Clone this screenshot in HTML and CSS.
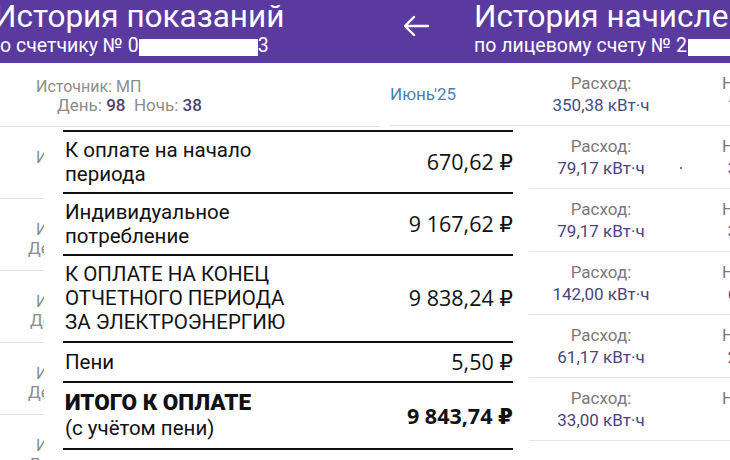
FILE: index.html
```html
<!DOCTYPE html>
<html lang="ru">
<head>
    <meta charset="UTF-8">
    <meta name="viewport" content="width=device-width, initial-scale=1.0">
    <title>История начислений</title>
    <link rel="stylesheet" href="styles.css">
</head>
<body>
    <div class="collage">

        <section class="screen screen-meter">
            <header class="bar">
                <div class="bar-text">
                    <h1>История показаний</h1>
                    <p>о счетчику № 0<span class="mask"></span>3</p>
                </div>
            </header>
            <div class="list">
                <div class="m-row m-first">
                    <div class="src">Источник: МП</div>
                    <div class="vals">День: <b>98</b>&nbsp; Ночь: <b>38</b></div>
                </div>
                <div class="m-row">
                    <div class="src">Источник: МП</div>
                    <div class="vals vals-far">День: <b>112</b>&nbsp; Ночь: <b>41</b></div>
                </div>
                <div class="m-row">
                    <div class="src">Источник: МП</div>
                    <div class="vals">День: <b>104</b>&nbsp; Ночь: <b>36</b></div>
                </div>
                <div class="m-row">
                    <div class="src">Источник: МП</div>
                    <div class="vals vals-near">День: <b>97</b>&nbsp; Ночь: <b>33</b></div>
                </div>
                <div class="m-row">
                    <div class="src">Источник: МП</div>
                    <div class="vals">День: <b>88</b>&nbsp; Ночь: <b>30</b></div>
                </div>
                <div class="m-row">
                    <div class="src">Источник: МП</div>
                    <div class="vals">День: <b>91</b>&nbsp; Ночь: <b>29</b></div>
                </div>
            </div>
        </section>

        <section class="screen screen-bill">
            <header class="bar">
                <svg class="back" width="28" height="24" viewBox="0 0 28 24">
                    <path d="M26 12H3M12 3L3 12l9 9" fill="none" stroke="#fff" stroke-width="2.4" stroke-linecap="round" stroke-linejoin="round"/>
                </svg>
                <div class="bar-text">
                    <h1>История начислений</h1>
                    <p>по лицевому счету № 2<span class="mask mask-wide"></span></p>
                </div>
            </header>
            <div class="list">
                <div class="b-row">
                    <div class="month">Июнь'25</div>
                    <div class="usage"><span>Расход:</span><strong class="navy">350,38 кВт·ч</strong></div>
                    <div class="charge"><span>Начислено:</span><strong>1 984,66 ₽</strong></div>
                </div>
                <div class="b-row">
                    <div class="month">Май'25</div>
                    <div class="usage"><span>Расход:</span><strong>79,17 кВт·ч</strong></div>
                    <div class="charge"><span>Начислено:</span><strong>3 448,71 ₽</strong></div>
                    <i class="speck"></i>
                </div>
                <div class="b-row">
                    <div class="month">Апр'25</div>
                    <div class="usage"><span>Расход:</span><strong>79,17 кВт·ч</strong></div>
                    <div class="charge"><span>Начислено:</span><strong>3 448,71 ₽</strong></div>
                </div>
                <div class="b-row">
                    <div class="month">Мар'25</div>
                    <div class="usage"><span>Расход:</span><strong>142,00 кВт·ч</strong></div>
                    <div class="charge"><span>Начислено:</span><strong>6 183,10 ₽</strong></div>
                </div>
                <div class="b-row">
                    <div class="month">Фев'25</div>
                    <div class="usage"><span>Расход:</span><strong>61,17 кВт·ч</strong></div>
                    <div class="charge"><span>Начислено:</span><strong>2 664,95 ₽</strong></div>
                </div>
                <div class="b-row">
                    <div class="month">Янв'25</div>
                    <div class="usage"><span>Расход:</span><strong>33,00 кВт·ч</strong></div>
                    <div class="charge"><span>Начислено:</span><strong class="short">143,69 ₽</strong></div>
                </div>
            </div>
        </section>

        <!-- summary card pasted over both screens -->
        <div class="summary">
            <div class="s-row">
                <div class="s-label">К оплате на начало<br>периода</div>
                <div class="s-sum">670,62 ₽</div>
            </div>
            <div class="s-row">
                <div class="s-label">Индивидуальное<br>потребление</div>
                <div class="s-sum">9 167,62 ₽</div>
            </div>
            <div class="s-row s-triple">
                <div class="s-label">К ОПЛАТЕ НА КОНЕЦ<br>ОТЧЕТНОГО ПЕРИОДА<br>ЗА ЭЛЕКТРОЭНЕРГИЮ</div>
                <div class="s-sum">9 838,24 ₽</div>
            </div>
            <div class="s-row s-single">
                <div class="s-label">Пени</div>
                <div class="s-sum">5,50 ₽</div>
            </div>
            <div class="s-row s-total">
                <div class="s-label"><b>ИТОГО К ОПЛАТЕ</b><br>(с учётом пени)</div>
                <div class="s-sum">9 843,74 ₽</div>
            </div>
        </div>

    </div>
</body>
</html>
```

FILE: styles.css
```css
body {
    margin: 0;
    background-color: #fff;
    font-family: Roboto, "Noto Sans", sans-serif;
}

.collage {
    position: relative;
    display: grid;
    grid-template-columns: 380px 350px;
    width: 730px;
    height: 460px;
    overflow: hidden;
}

.screen {
    overflow: hidden;
    background-color: #fff;
}

/* purple app bar */
.bar {
    display: flex;
    align-items: flex-start;
    height: 63px;
    background-color: #5b3a9f;
    color: #fff;
    white-space: nowrap;
}

.bar h1 {
    margin: 0;
    font-size: 31.5px;
    line-height: 34px;
    font-weight: 400;
}

.bar p {
    display: flex;
    align-items: center;
    margin: 1px 0 0;
    font-size: 19.5px;
    line-height: 22px;
}

.mask {
    display: inline-block;
    width: 119px;
    height: 17px;
    margin-top: 2px;
    background-color: #fff;
}

.mask-wide {
    width: 60px;
    margin-left: 1px;
}

.screen-meter .bar-text {
    margin-left: -6px;
}

.screen-meter .bar p {
    margin-left: 6px;
}

.screen-bill .bar {
    padding-left: 22px;
}

.back {
    margin-top: 14px;
    margin-right: 44px;
    flex: none;
}

/* meter readings list */
.m-row {
    height: 72px;
    border-bottom: 1px solid #e6e6e6;
    padding-top: 21px;
    box-sizing: border-box;
    font-size: 17px;
    line-height: 19px;
    color: #8c8c8c;
    white-space: nowrap;
}

.m-row.m-first {
    height: 64px;
    padding-top: 14px;
}

.src {
    padding-left: 36px;
    font-size: 16px;
}

.vals {
    padding-left: 28px;
}

.m-first .vals {
    padding-left: 57px;
}

.vals-far {
    padding-left: 70px;
}

.vals-near {
    padding-left: 30px;
}

.vals b {
    font-weight: 500;
    color: #4b4568;
}

/* charges list */
.screen-bill .list {
    width: 480px;
}

.b-row {
    position: relative;
    display: grid;
    grid-template-columns: 130px 162px 172px;
    align-items: center;
    height: 63px;
    margin-left: 10px;
    border-bottom: 1px solid #e6e6e6;
    box-sizing: border-box;
    font-size: 17px;
    line-height: 22px;
    white-space: nowrap;
}

.month {
    color: #4a7fb6;
}

.usage,
.charge {
    display: flex;
    flex-direction: column;
    align-items: center;
    color: #7a7a7a;
}

.usage strong,
.charge strong {
    font-weight: 400;
    color: #4d4282;
}

.usage strong.navy {
    color: #434f80;
}

.speck {
    position: absolute;
    left: 290px;
    top: 41px;
    width: 2px;
    height: 2px;
    background-color: #777;
}

/* summary card */
.summary {
    position: absolute;
    left: 44px;
    top: 129px;
    width: 485px;
    height: 331px;
    padding: 1px 16px 0 19px;
    box-sizing: border-box;
    background-color: #fff;
    color: #111;
}

.s-row {
    display: flex;
    justify-content: space-between;
    align-items: center;
    padding: 6px 0 6px 2px;
    border-top: 2px solid #111;
}

.s-row.s-triple {
    padding: 6px 0 7px 2px;
}

.s-row.s-single,
.s-row.s-total {
    padding: 7px 0 7px 2px;
}

.s-row:last-child {
    border-bottom: 2px solid #111;
}

.s-label {
    font-size: 20.5px;
    line-height: 24px;
}

.s-total .s-label {
    line-height: 25px;
}

.s-label b {
    font-size: 22.5px;
    font-weight: 900;
}

.s-sum {
    font-family: "Open Sans", "DejaVu Sans", sans-serif;
    font-size: 21.5px;
    line-height: 24px;
}

.s-total .s-sum {
    font-weight: 700;
}
```
